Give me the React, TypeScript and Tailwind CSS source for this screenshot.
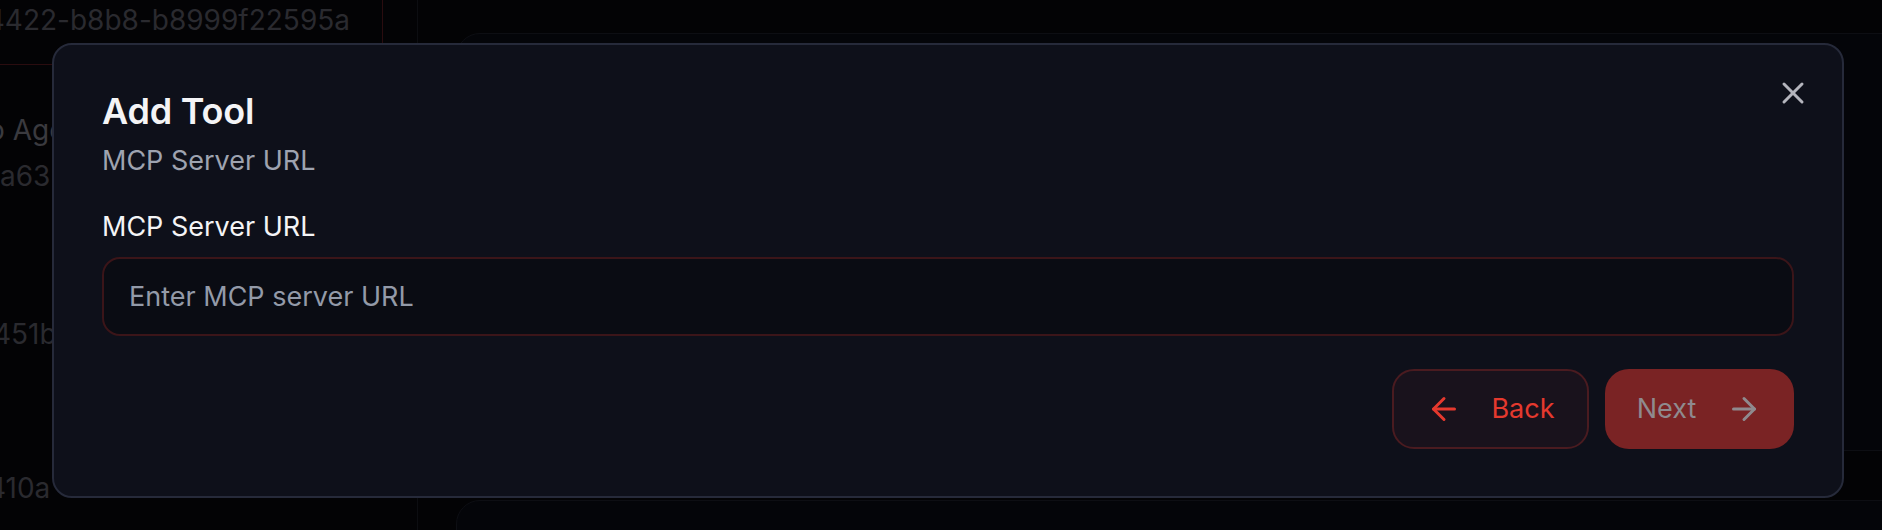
import React from 'react';
import { ArrowLeft, ArrowRight, X } from 'lucide-react';

const FONT = { fontFamily: 'Inter, "Noto Sans", sans-serif' };

// dimmed page behind the modal
const Backdrop: React.FC = () => (
  <div className="flex h-full w-full">
    <div className="w-[383px] flex-shrink-0 flex flex-col text-[28px] leading-[40px] text-[#2a2a2f]">
      <div className="h-[65px] border-r border-b border-[#2a0c0f] flex justify-end overflow-hidden pr-[32px]">
        <span className="whitespace-nowrap">7d3e91c0-2f6a-4422-b8b8-b8999f22595a</span>
      </div>
      <div className="pt-[45px] overflow-hidden">
        <div className="whitespace-nowrap ml-[-73px] text-[#3a3a3f]">Demo Agent</div>
        <div className="whitespace-nowrap mt-[6px]">a63-</div>
      </div>
      <div className="pt-[118px] overflow-hidden">
        <div className="whitespace-nowrap ml-[-7px]">451b</div>
      </div>
      <div className="pt-[114px] overflow-hidden">
        <div className="whitespace-nowrap ml-[-12px]">410a</div>
      </div>
    </div>
    <div className="w-[34px] flex-shrink-0" />
    <div className="flex-1 border-l border-[#0c0d11] pl-[38px] pt-[33px] flex flex-col gap-[49px]">
      <div className="w-[1500px] h-[418px] flex-shrink-0 rounded-[24px] border border-[#0d0e13] bg-[#040509]" />
      <div className="w-[1500px] h-[100px] flex-shrink-0 rounded-[24px] border border-[#0d0e13] bg-[#040509]" />
    </div>
  </div>
);

const App: React.FC = () => {
  return (
    <div className="relative w-[1882px] h-[530px] overflow-hidden bg-[#030305]" style={FONT}>
      <Backdrop />

      {/* Modal */}
      <div className="absolute left-[52px] top-[43px] w-[1792px] rounded-[20px] border-2 border-[#262a3a] bg-[#0e101a] pl-[48px] pr-[48px] pt-[42px] pb-[47px]">
        <button className="absolute right-[31px] top-[30px] text-[#b4b5bd]">
          <X size={36} strokeWidth={2} />
        </button>

        <h2 className="text-[36px] leading-[48px] font-semibold text-[#f4f4f6] tracking-[-0.2px]">Add Tool</h2>
        <p className="mt-[5px] text-[27px] leading-[42px] text-[#9ea3b0]">MCP Server URL</p>

        <label className="block mt-[24px] text-[27px] leading-[42px] font-normal text-[#f4f4f6]">MCP Server URL</label>
        <input
          className="mt-[9px] w-full h-[79px] rounded-[18px] border-2 border-[#3b1519] bg-[#0a0c13] px-[25px] text-[27px] text-white placeholder:text-[#939aa8] outline-none"
          placeholder="Enter MCP server URL"
        />

        <div className="mt-[33px] flex justify-end gap-[16px]">
          <button className="w-[197px] h-[80px] rounded-[22px] border-2 border-[#4a1b20] bg-[#19121c] flex items-center justify-center gap-[29px] text-[27px] text-[#e5392e]">
            <ArrowLeft size={36} strokeWidth={2} />
            <span>Back</span>
          </button>
          <button className="w-[189px] h-[80px] rounded-[24px] bg-[#7a2324] flex items-center justify-center gap-[30px] text-[27px] text-[#8f8a8e]">
            <span>Next</span>
            <ArrowRight size={36} strokeWidth={2} />
          </button>
        </div>
      </div>
    </div>
  );
};

export default App;
